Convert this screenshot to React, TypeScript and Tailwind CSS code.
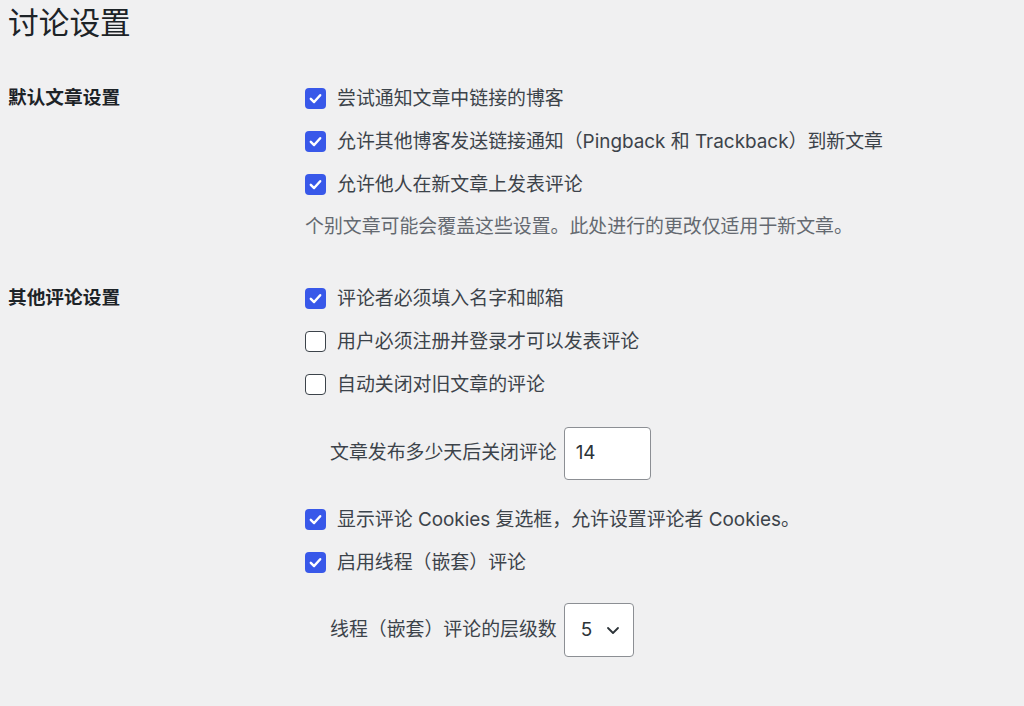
import React from "react";

const font = { fontFamily: '"Inter", "Noto Sans CJK SC", sans-serif' };

function Box({ checked }: { checked: boolean }) {
  return checked ? (
    <span className="w-[21px] h-[21px] rounded-[4px] bg-[#3858e9] flex items-center justify-center shrink-0">
      <svg width="15" height="15" viewBox="0 0 16 16" fill="none">
        <path d="M3 8.4 L6.5 11.8 L13 4.5" stroke="#fff" strokeWidth="2.6" strokeLinecap="round" strokeLinejoin="round" />
      </svg>
    </span>
  ) : (
    <span className="w-[21px] h-[21px] rounded-[4px] bg-white border-[1.5px] border-[#3c434a] shrink-0" />
  );
}

function Row({ checked, children }: { checked: boolean; children: React.ReactNode }) {
  return (
    <div className="h-[43px] flex items-center gap-[11px]">
      <Box checked={checked} />
      <span className="text-[18.9px] leading-[28px] pt-[1px] text-[#3c434a] whitespace-nowrap">{children}</span>
    </div>
  );
}

export default function App() {
  return (
    <div className="w-[1024px] h-[706px] bg-[#f0f0f1] overflow-hidden pl-[8px]" style={font}>
      <h1 className="h-[46px] flex items-center text-[30.7px] text-[#1d2327] font-normal">讨论设置</h1>

      <div className="flex mt-[30.5px]">
        <div className="w-[297px] h-[43px] flex items-center text-[18.7px] font-bold text-[#1d2327]">默认文章设置</div>
        <div className="flex flex-col">
          <Row checked>尝试通知文章中链接的博客</Row>
          <Row checked>允许其他博客发送链接通知（Pingback 和 Trackback）到新文章</Row>
          <Row checked>允许他人在新文章上发表评论</Row>
          <div className="h-[43px] flex items-center text-[18.9px] pt-[1px] text-[#646970]">
            个别文章可能会覆盖这些设置。此处进行的更改仅适用于新文章。
          </div>
        </div>
      </div>

      <div className="flex mt-[28px]">
        <div className="w-[297px] h-[43px] flex items-center text-[18.7px] font-bold text-[#1d2327]">其他评论设置</div>
        <div className="flex flex-col">
          <Row checked>评论者必须填入名字和邮箱</Row>
          <Row checked={false}>用户必须注册并登录才可以发表评论</Row>
          <Row checked={false}>自动关闭对旧文章的评论</Row>
          <div className="mt-[21px] pl-[25px] flex items-center gap-[7px] text-[18.9px] text-[#3c434a]">
            <span>文章发布多少天后关闭评论</span>
            <div className="w-[87px] h-[53px] bg-white border border-[#8c8f94] rounded-[4px] flex items-center pl-[11px] text-[18.9px] text-[#2c3338]">
              14
            </div>
          </div>
          <div className="mt-[18px]">
            <Row checked>显示评论 Cookies 复选框，允许设置评论者 Cookies。</Row>
            <Row checked>启用线程（嵌套）评论</Row>
          </div>
          <div className="mt-[19.5px] pl-[25px] flex items-center gap-[7px] text-[18.9px] text-[#3c434a]">
            <span>线程（嵌套）评论的层级数</span>
            <div className="w-[70px] h-[54px] bg-white border border-[#8c8f94] rounded-[4px] flex items-center pl-[16px] gap-[13px] text-[#2c3338]">
              <span className="text-[18.9px]">5</span>
              <svg width="16" height="16" viewBox="0 0 16 16" fill="none">
                <path d="M3 6 L8 11 L13 6" stroke="#2c3338" strokeWidth="1.8" strokeLinecap="round" strokeLinejoin="round" />
              </svg>
            </div>
          </div>
        </div>
      </div>
    </div>
  );
}
